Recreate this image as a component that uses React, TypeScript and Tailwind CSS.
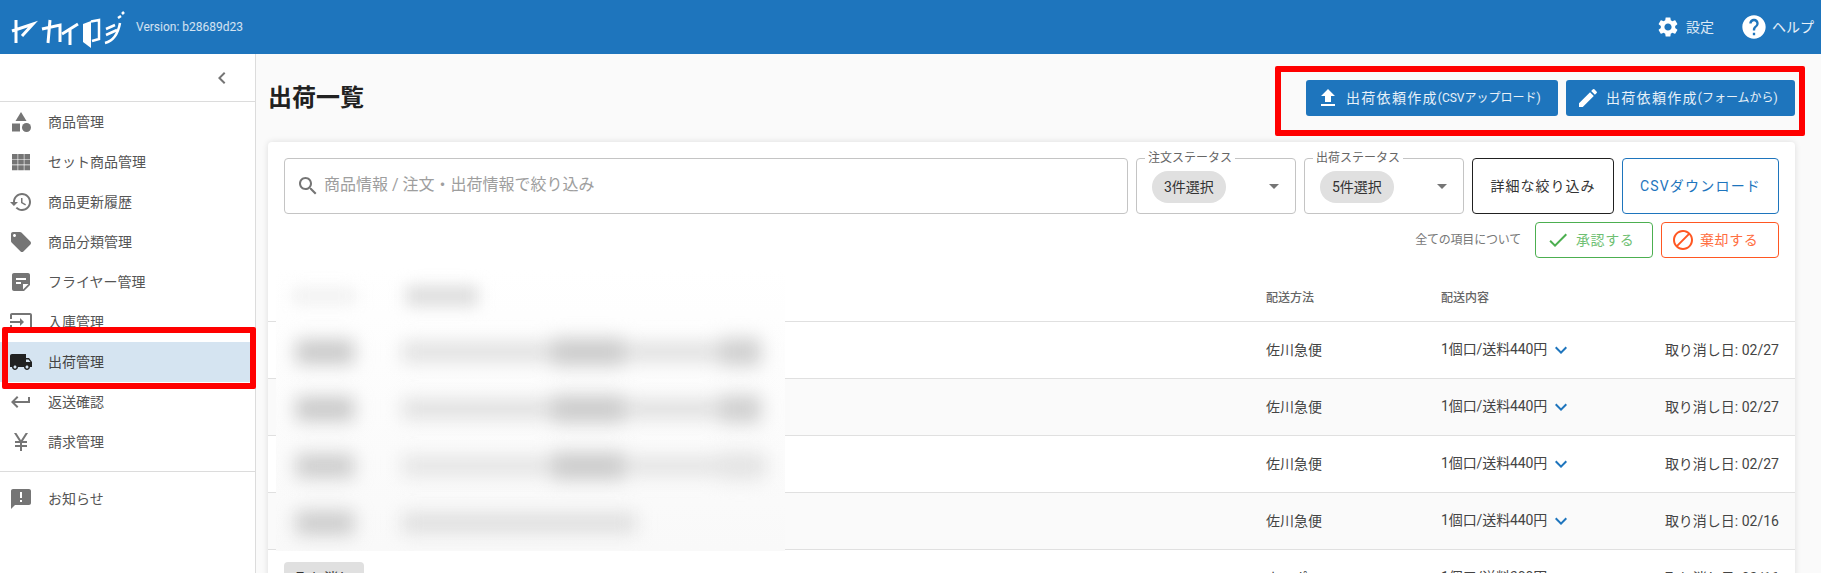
import type { ReactNode } from 'react';

const ICONS: Record<string, ReactNode> = {
  category: (
    <>
      <path d="M12 2l-5.5 9h11z" />
      <circle cx="17.5" cy="17.5" r="4.5" />
      <path d="M3 13.5h8v8H3z" />
    </>
  ),
  apps: <path d="M3 4h5.6v5H3zM9.2 4h5.6v5H9.2zM15.4 4H21v5h-5.6zM3 9.6h5.6v5H3zM9.2 9.6h5.6v5H9.2zM15.4 9.6H21v5h-5.6zM3 15.2h5.6v5H3zM9.2 15.2h5.6v5H9.2zM15.4 15.2H21v5h-5.6z" />,
  history: <path d="M13 3c-4.97 0-9 4.03-9 9H1l3.89 3.89.07.14L9 12H6c0-3.87 3.13-7 7-7s7 3.13 7 7-3.13 7-7 7c-1.93 0-3.68-.79-4.94-2.06l-1.42 1.42C8.27 19.99 10.51 21 13 21c4.97 0 9-4.03 9-9s-4.03-9-9-9zm-1 5v5l4.28 2.54.72-1.21-3.5-2.08V8H12z" />,
  tag: <path d="M21.41 11.58l-9-9C12.05 2.22 11.55 2 11 2H4c-1.1 0-2 .9-2 2v7c0 .55.22 1.05.59 1.42l9 9c.36.36.86.58 1.41.58.55 0 1.05-.22 1.41-.59l7-7c.37-.36.59-.86.59-1.41 0-.55-.23-1.06-.59-1.42zM5.5 7C4.67 7 4 6.33 4 5.5S4.67 4 5.5 4 7 4.67 7 5.5 6.33 7 5.5 7z" />,
  note: <path d="M19 3H4.99C3.89 3 3 3.9 3 5l.01 14c0 1.1.89 2 1.99 2h10l6-6V5c0-1.1-.9-2-2-2zM7 8h10v2H7V8zm5 6H7v-2h5v2zm2 5.5V14h5.5L14 19.5z" />,
  input: <path d="M21 3.01H3c-1.1 0-2 .9-2 2V9h2V4.99h18v14.03H3V15H1v4.01c0 1.1.9 1.98 2 1.98h18c1.1 0 2-.88 2-1.98v-14c0-1.11-.9-2-2-2zM11 16l4-4-4-4v3H1v2h10v3z" />,
  truck: <path d="M20 8h-3V4H3c-1.1 0-2 .9-2 2v11h2c0 1.66 1.34 3 3 3s3-1.34 3-3h6c0 1.66 1.34 3 3 3s3-1.34 3-3h2v-5l-3-4zM6 18.5c-.83 0-1.5-.67-1.5-1.5s.67-1.5 1.5-1.5 1.5.67 1.5 1.5-.67 1.5-1.5 1.5zm13.5-9l1.96 2.5H17V9.5h2.5zm-1.5 9c-.83 0-1.5-.67-1.5-1.5s.67-1.5 1.5-1.5 1.5.67 1.5 1.5-.67 1.5-1.5 1.5z" />,
  back: <path d="M19 7v4H5.83l3.58-3.59L8 6l-6 6 6 6 1.41-1.41L5.83 13H21V7z" />,
  yen: <path d="M13.92 11H18v2h-5v2h5v2h-5v4h-2v-4H6v-2h5v-2H6v-2h4.08L5 3h2.37L12 10.29 16.63 3H19z" />,
  notice: <path d="M20 2H4c-1.1 0-1.99.9-1.99 2L2 22l4-4h14c1.1 0 2-.9 2-2V4c0-1.1-.9-2-2-2zm-7 9h-2V5h2v6zm0 4h-2v-2h2v2z" />,
  settings: <path d="M19.14 12.94c.04-.3.06-.61.06-.94 0-.32-.02-.64-.07-.94l2.03-1.58c.18-.14.23-.41.12-.61l-1.92-3.32c-.12-.22-.37-.29-.59-.22l-2.39.96c-.5-.38-1.03-.7-1.62-.94l-.36-2.54c-.04-.24-.24-.41-.48-.41h-3.84c-.24 0-.43.17-.47.41l-.36 2.54c-.59.24-1.13.57-1.62.94l-2.39-.96c-.22-.08-.47 0-.59.22L2.74 8.87c-.12.21-.08.47.12.61l2.03 1.58c-.05.3-.09.63-.09.94s.02.64.07.94l-2.03 1.58c-.18.14-.23.41-.12.61l1.92 3.32c.12.22.37.29.59.22l2.39-.96c.5.38 1.03.7 1.62.94l.36 2.54c.05.24.24.41.48.41h3.84c.24 0 .44-.17.47-.41l.36-2.54c.59-.24 1.13-.56 1.62-.94l2.39.96c.22.08.47 0 .59-.22l1.92-3.32c.12-.22.07-.47-.12-.61l-2.01-1.58zM12 15.6c-1.98 0-3.6-1.62-3.6-3.6s1.62-3.6 3.6-3.6 3.6 1.62 3.6 3.6-1.62 3.6-3.6 3.6z" />,
  help: <path d="M12 2C6.48 2 2 6.48 2 12s4.48 10 10 10 10-4.48 10-10S17.52 2 12 2zm1 17h-2v-2h2v2zm2.07-7.75l-.9.92C13.45 12.9 13 13.5 13 15h-2v-.5c0-1.1.45-2.1 1.17-2.83l1.24-1.26c.37-.36.59-.86.59-1.41 0-1.1-.9-2-2-2s-2 .9-2 2H8c0-2.21 1.79-4 4-4s4 1.79 4 4c0 .88-.36 1.68-.93 2.25z" />,
  upload: <path d="M9 16h6v-6h4l-7-7-7 7h4zm-4 2h14v2H5z" />,
  edit: <path d="M3 17.25V21h3.75L17.81 9.94l-3.75-3.75L3 17.25zM20.71 7.04c.39-.39.39-1.02 0-1.41l-2.34-2.34a.9959.9959 0 0 0-1.41 0l-1.83 1.83 3.75 3.75 1.83-1.83z" />,
  search: <path d="M15.5 14h-.79l-.28-.27C15.41 12.59 16 11.11 16 9.5 16 5.91 13.09 3 9.5 3S3 5.91 3 9.5 5.91 16 9.5 16c1.61 0 3.09-.59 4.23-1.57l.27.28v.79l5 4.99L20.49 19l-4.99-5zm-6 0C7.01 14 5 11.99 5 9.5S7.01 5 9.5 5 14 7.01 14 9.5 11.99 14 9.5 14z" />,
  check: <path d="M9 16.17L4.83 12l-1.42 1.41L9 19 21 7l-1.41-1.41z" />,
  block: <path d="M12 2C6.48 2 2 6.48 2 12s4.48 10 10 10 10-4.48 10-10S17.52 2 12 2zM4 12c0-4.42 3.58-8 8-8 1.85 0 3.55.63 4.9 1.69L5.69 16.9C4.63 15.55 4 13.85 4 12zm8 8c-1.85 0-3.55-.63-4.9-1.69L18.31 7.1C19.37 8.45 20 10.15 20 12c0 4.42-3.58 8-8 8z" />,
  chevronLeft: <path d="M15.41 7.41L14 6l-6 6 6 6 1.41-1.41L10.83 12z" />,
  chevronDown: <path d="M7.41 8.59L12 13.17l4.59-4.58L18 10l-6 6-6-6z" />,
  caret: <path d="M7 10l5 5 5-5z" />,
};

function Icon({ name, className }: { name: string; className?: string }) {
  return (
    <svg viewBox="0 0 24 24" fill="currentColor" className={className}>
      {ICONS[name]}
    </svg>
  );
}

// ロゴはざっくり手書き
function Logo() {
  return (
    <svg viewBox="0 0 125 46" className="w-[125px] h-[46px] shrink-0" fill="none" stroke="white" strokeWidth="3">
      <path d="M12 27L33 20L22 32M16 16V39" />
      <path d="M42 25L60 21V38M50 16L48 39" />
      <path d="M62 30L78 20M70 25V41" />
      <path d="M83 20L91 17V44L83 38Z" fill="white" stroke="none" />
      <path d="M91 17.5L99 16V35L92 37" strokeWidth="2.5" />
      <path d="M106 25L115 21M106 31L117 26M105 39C113 37 118 30 120 19" strokeWidth="2.5" />
      <path d="M118 14L121 12M122 10L124 8" strokeWidth="2.5" />
    </svg>
  );
}

const NAV = [
  { icon: 'category', label: '商品管理' },
  { icon: 'apps', label: 'セット商品管理' },
  { icon: 'history', label: '商品更新履歴' },
  { icon: 'tag', label: '商品分類管理' },
  { icon: 'note', label: 'フライヤー管理' },
  { icon: 'input', label: '入庫管理' },
  { icon: 'truck', label: '出荷管理', active: true },
  { icon: 'back', label: '返送確認' },
  { icon: 'yen', label: '請求管理' },
];

function NavItem({ icon, label, active }: { icon: string; label: string; active?: boolean }) {
  return (
    <div className={`h-10 flex items-center pl-[9px] text-sm ${active ? 'bg-[#d5e4f1] text-[#444]' : 'text-[#555]'}`}>
      <Icon name={icon} className={`w-6 h-6 ${active ? 'text-[#212121]' : 'text-[#757575]'}`} />
      <span className="ml-[15px]">{label}</span>
    </div>
  );
}

function Sidebar() {
  return (
    <aside className="relative w-[256px] shrink-0 bg-white border-r border-[#dcdcdc]">
      <div className="h-[48px] flex items-center justify-end pr-[21px] border-b border-[#dcdcdc]">
        <Icon name="chevronLeft" className="w-6 h-6 text-[#757575]" />
      </div>
      <div className="pb-[9px] border-b border-[#dcdcdc]">
        {NAV.map((n) => (
          <NavItem key={n.label} icon={n.icon} label={n.label} active={n.active} />
        ))}
      </div>
      <div className="pt-[7px]">
        <NavItem icon="notice" label="お知らせ" />
      </div>
      <div className="absolute left-[2px] top-[273px] w-[254px] h-[62px] border-[6px] border-[#ff0000] rounded-[2px]" />
    </aside>
  );
}

function PrimaryButton({ icon, sub, className }: { icon: string; sub: string; className: string }) {
  return (
    <button className={`h-9 flex items-center rounded-[3px] bg-[#1e75bd] text-white/90 ${className}`}>
      <Icon name={icon} className="w-6 h-6 text-white" />
      <span className="ml-[6px] text-sm tracking-[1.3px]">出荷依頼作成</span>
      <span className="text-xs">{sub}</span>
    </button>
  );
}

function StatusSelect({ label, chip }: { label: string; chip: string }) {
  return (
    <div className="relative w-[160px] h-14 shrink-0 border border-[#c4c4c4] rounded flex items-center pl-[15px] pt-[2px]">
      <span className="absolute left-[8px] top-[-8px] px-[3px] bg-white text-xs leading-[14px] text-[#666]">{label}</span>
      <span className="h-8 px-[12px] rounded-full bg-[#e0e0e0] flex items-center text-sm text-[#333]">{chip}</span>
      <Icon name="caret" className="absolute right-[9px] top-[15px] w-6 h-6 text-[#757575]" />
    </div>
  );
}

function Filters() {
  return (
    <>
      <div className="flex gap-2">
        <label className="flex-1 h-14 flex items-center pl-[11px] border border-[#c4c4c4] rounded">
          <Icon name="search" className="w-6 h-6 text-[#757575]" />
          <input
            placeholder="商品情報 / 注文・出荷情報で絞り込み"
            className="ml-[4px] -mt-[2px] flex-1 outline-none text-base placeholder:text-[#9e9e9e]"
          />
        </label>
        <StatusSelect label="注文ステータス" chip="3件選択" />
        <StatusSelect label="出荷ステータス" chip="5件選択" />
        <button className="w-[142px] h-14 shrink-0 border border-[#212121] rounded text-sm tracking-[1px] text-[#333]">
          詳細な絞り込み
        </button>
        <button className="w-[157px] h-14 shrink-0 border border-[#1e75bd] rounded text-sm tracking-[1.2px] text-[#1e75bd]">
          CSVダウンロード
        </button>
      </div>
      <div className="mt-2 flex items-center justify-end gap-2">
        <span className="mr-[6px] text-xs tracking-[-0.2px] text-[#777]">全ての項目について</span>
        <button className="w-[118px] h-9 flex items-center pl-[10px] border border-[#4caf50] rounded text-sm tracking-[0.6px] text-[#6fbf73]">
          <Icon name="check" className="w-6 h-6 text-[#4caf50]" />
          <span className="ml-[6px]">承認する</span>
        </button>
        <button className="w-[118px] h-9 flex items-center pl-[9px] border border-[#ff5722] rounded text-sm tracking-[0.6px] text-[#ff6e40]">
          <Icon name="block" className="w-6 h-6 text-[#ff5722]" />
          <span className="ml-[5px]">棄却する</span>
        </button>
      </div>
    </>
  );
}

const ROWS = [
  { carrier: '佐川急便', fee: '1個口/送料440円', date: '取り消し日: 02/27' },
  { carrier: '佐川急便', fee: '1個口/送料440円', date: '取り消し日: 02/27' },
  { carrier: '佐川急便', fee: '1個口/送料440円', date: '取り消し日: 02/27' },
  { carrier: '佐川急便', fee: '1個口/送料440円', date: '取り消し日: 02/16' },
  { carrier: 'ネコポス', fee: '1個口/送料300円', date: '取り消し日: 02/16', chip: true },
];

function TableRow({ row, shaded }: { row: (typeof ROWS)[number]; shaded: boolean }) {
  return (
    <div
      className={`h-[57px] shrink-0 grid grid-cols-[982px_175px_1fr] items-center px-4 border-t border-[#e0e0e0] text-sm text-[#444] ${shaded ? 'bg-[#fafafa]' : ''}`}
    >
      <div>
        {row.chip && (
          <span className="w-20 h-8 rounded bg-[#e0e0e0] flex items-center justify-center text-[#333]">取り消し</span>
        )}
      </div>
      <div>{row.carrier}</div>
      <div className="flex items-center justify-between">
        <div className="flex items-center">
          <span className="-mt-[2px] tracking-[-0.1px]">{row.fee}</span>
          <Icon name="chevronDown" className="ml-[2px] w-6 h-6 text-[#1e75bd]" />
        </div>
        <span>{row.date}</span>
      </div>
    </div>
  );
}

// ぼかし部分: 元の個人情報はグレーの帯で代用
function BlurBars({ first, rest, hot, tail }: { first: string; rest: string; hot?: boolean; tail?: string }) {
  return (
    <div className="h-[57px] flex items-center pl-[20px] gap-[48px]">
      <div className={`h-[24px] w-[58px] blur-[9px] ${first}`} />
      <div className={`relative h-[20px] blur-[9px] ${rest}`}>
        {hot && <div className="absolute left-[150px] top-[-4px] w-[72px] h-[28px] bg-[#cccccc]" />}
        {tail && <div className={`absolute left-[318px] top-[-4px] w-[40px] h-[28px] ${tail}`} />}
      </div>
    </div>
  );
}

function BlurOverlay() {
  return (
    <div className="absolute left-[8px] top-[126px] w-[509px] h-[283px] bg-gradient-to-b from-white to-[#f9f9f9] overflow-hidden flex flex-col">
      <div className="h-[55px] shrink-0 flex items-center pl-[16px] gap-[50px]">
        <div className="h-[14px] w-[64px] bg-[#efefef] blur-[8px]" />
        <div className="h-[20px] w-[72px] bg-[#dcdcdc] blur-[8px]" />
      </div>
      <BlurBars first="bg-[#c8c8c8]" rest="w-[360px] bg-[#e0e0e0]" hot tail="bg-[#d0d0d0]" />
      <BlurBars first="bg-[#c8c8c8]" rest="w-[360px] bg-[#e0e0e0]" hot tail="bg-[#d0d0d0]" />
      <BlurBars first="bg-[#cccccc]" rest="w-[365px] bg-[#e4e4e4]" hot tail="bg-[#e4e4e4]" />
      <BlurBars first="bg-[#cccccc]" rest="w-[234px] bg-[#dedede]" />
    </div>
  );
}

export default function App() {
  return (
    <div className="h-screen overflow-hidden flex flex-col bg-[#fafafa] font-['Roboto','Noto_Sans_CJK_JP',sans-serif]">
      <header className="h-[54px] shrink-0 flex items-center bg-[#1e75bd] text-white pr-[7px]">
        <Logo />
        <span className="ml-[11px] text-xs text-white/80">Version: b28689d23</span>
        <div className="ml-auto flex items-center">
          <Icon name="settings" className="w-6 h-6" />
          <span className="ml-[6px] text-sm text-white/85">設定</span>
          <Icon name="help" className="ml-[26px] w-7 h-7" />
          <span className="ml-[4px] text-sm text-white/90">ヘルプ</span>
        </div>
      </header>
      <div className="flex-1 flex min-h-0">
        <Sidebar />
        <main className="relative flex-1 pl-3 pr-[26px]">
          <div className="h-[88px] flex items-center justify-between">
            <h1 className="text-2xl font-bold text-[#212121]">出荷一覧</h1>
            <div className="flex gap-2">
              <PrimaryButton icon="upload" sub="(CSVアップロード)" className="w-[252px] pl-[10px]" />
              <PrimaryButton icon="edit" sub="(フォームから)" className="w-[229px] pl-[10px]" />
            </div>
          </div>
          <div className="absolute right-[16px] top-[12px] w-[530px] h-[70px] border-[6px] border-[#ff0000] rounded-[2px]" />
          <section className="relative bg-white rounded shadow-[0_0_6px_rgba(0,0,0,0.12)] pt-4">
            <div className="px-4">
              <Filters />
            </div>
            <div className="h-[63px] mt-0 grid grid-cols-[982px_175px_1fr] items-center px-4 pt-[16px] text-xs font-medium text-[#666]">
              <div />
              <div>配送方法</div>
              <div>配送内容</div>
            </div>
            {ROWS.map((row, i) => (
              <TableRow key={i} row={row} shaded={i % 2 === 1} />
            ))}
            <BlurOverlay />
          </section>
        </main>
      </div>
    </div>
  );
}
